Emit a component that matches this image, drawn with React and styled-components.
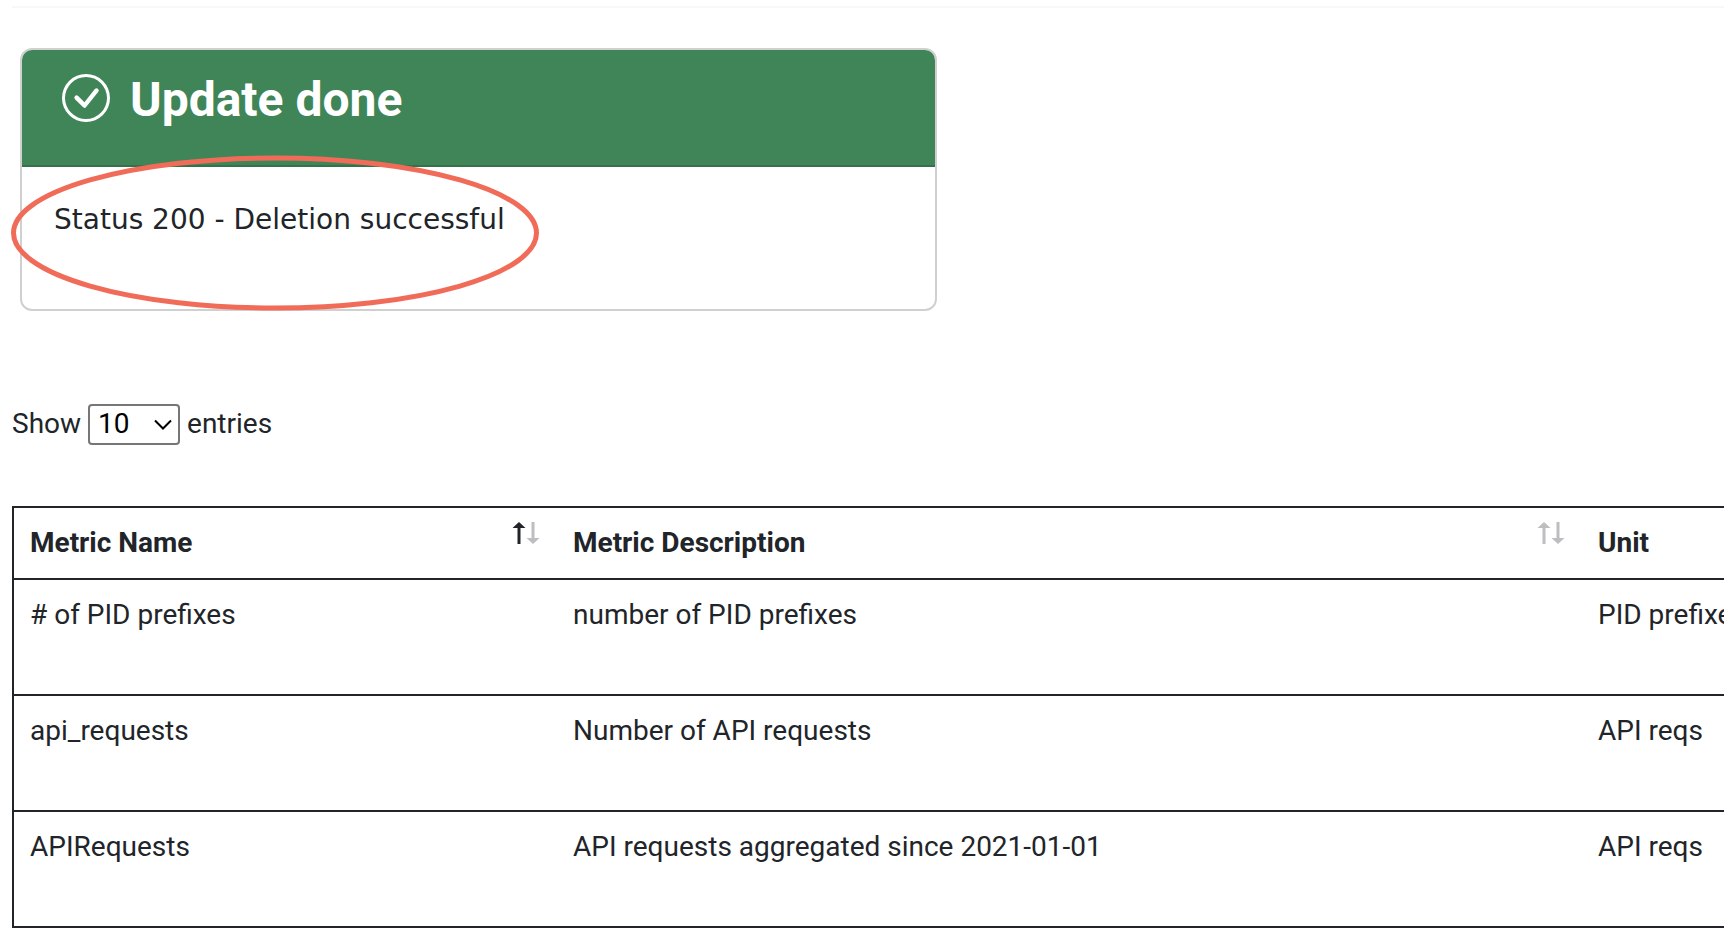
import React, { useState } from "react";
import styled, { createGlobalStyle } from "styled-components";
import { BsCheckCircle } from "react-icons/bs";

const GlobalStyle = createGlobalStyle`
  *, *::before, *::after { box-sizing: border-box; }
  body {
    margin: 0;
    overflow-x: hidden;
    background: #fff;
    color: #212529;
    font: 400 28px/42px Roboto, "Liberation Sans", sans-serif;
  }
`;

const Page = styled.main`
  padding: 6px 0 0 12px;
`;

const Divider = styled.hr`
  margin: 0 0 40px;
  border: 0;
  border-top: 2px solid #f8f8f8;
`;

const Card = styled.section`
  position: relative;
  width: 54%;
  max-width: 917px;
  min-width: 540px;
  margin-left: 8px;
  border: 2px solid #d0d0d0;
  border-radius: 12px;
`;

const CardHeader = styled.header`
  display: flex;
  align-items: flex-start;
  gap: 20px;
  padding: 24px 40px 39px;
  border-bottom: 2px solid #36714c;
  border-radius: 10px 10px 0 0;
  background: #408558;
  color: #fff;
`;

const CardTitle = styled.h2`
  margin: 0;
  font-size: 48px;
  line-height: 52px;
  font-weight: 700;
`;

const CardBody = styled.p`
  margin: 0;
  padding: 32px 32px 68px;
  font-family: Verdana, "DejaVu Sans", sans-serif;
`;

const Highlight = styled.svg`
  position: absolute;
  top: 105px;
  left: -12px;
  width: 530px;
  height: 157px;
  pointer-events: none;
`;

const LengthControl = styled.div`
  display: flex;
  align-items: center;
  gap: 7px;
  margin: 92px 0 61px;
`;

const SelectBox = styled.div`
  position: relative;
  display: flex;
`;

const Select = styled.select`
  appearance: none;
  width: 92px;
  height: 41px;
  padding: 0 8px;
  border: 2px solid #767676;
  border-radius: 4px;
  background: #fff;
  color: #000;
  font: inherit;
  line-height: 36px;
`;

const Chevron = styled.svg`
  position: absolute;
  top: 14px;
  right: 7px;
  pointer-events: none;
`;

const Table = styled.table`
  width: 1900px;
  table-layout: fixed;
  border-collapse: separate;
  border-spacing: 0;
  border: 2px solid #212529;
  border-bottom: 0;
`;

const NameCol = styled.col`
  width: 543px;
`;

const DescriptionCol = styled.col`
  width: 1025px;
`;

const HeadCell = styled.th`
  padding: 0;
  border-bottom: 2px solid #212529;
  text-align: left;
`;

const SortButton = styled.button`
  display: flex;
  justify-content: space-between;
  align-items: flex-start;
  width: 100%;
  padding: 14px 16px;
  border: 0;
  background: none;
  color: inherit;
  font: inherit;
  font-weight: 700;
  text-align: left;
  cursor: pointer;
`;

const Cell = styled.td`
  height: 116px;
  padding: 14px 16px;
  border-bottom: 2px solid #212529;
  vertical-align: top;
`;

const ACTIVE = "#212529";
const IDLE = "#bcbebf";

function SortIcon({ direction }) {
  return (
    <svg width="29" height="22" viewBox="0 0 29 22" aria-hidden="true">
      <path d="M7 0 13.5 6H8.5V22H5.5V6H.5Z" fill={direction === "asc" ? ACTIVE : IDLE} />
      <path d="M21 22 27.5 16H22.5V0H19.5V16H14.5Z" fill={direction === "desc" ? ACTIVE : IDLE} />
    </svg>
  );
}

const columns = ["Metric Name", "Metric Description", "Unit"];

const metrics = [
  ["# of PID prefixes", "number of PID prefixes", "PID prefixes"],
  ["api_requests", "Number of API requests", "API reqs"],
  ["APIRequests", "API requests aggregated since 2021-01-01", "API reqs"],
];

export default function App() {
  const [length, setLength] = useState("10");
  return (
    <Page>
      <GlobalStyle />
      <Divider />
      <Card>
        <CardHeader>
          <BsCheckCircle size={48} aria-hidden="true" />
          <CardTitle>Update done</CardTitle>
        </CardHeader>
        <CardBody>Status 200 - Deletion successful</CardBody>
        <Highlight viewBox="0 0 530 157" aria-hidden="true">
          <ellipse cx="265" cy="78" rx="261.5" ry="75" fill="none" stroke="#f06c59" strokeWidth="5" />
        </Highlight>
      </Card>

      <LengthControl>
        <label htmlFor="length">Show</label>
        <SelectBox>
          <Select id="length" value={length} onChange={(e) => setLength(e.target.value)}>
            <option>10</option>
            <option>25</option>
            <option>50</option>
            <option>100</option>
          </Select>
          <Chevron width="20" height="14" viewBox="0 0 20 14" aria-hidden="true">
            <path d="M2 2.5 10 10.5 18 2.5" fill="none" stroke="#000" strokeWidth="2" />
          </Chevron>
        </SelectBox>
        <span>entries</span>
      </LengthControl>

      <Table>
        <colgroup>
          <NameCol />
          <DescriptionCol />
          <col />
        </colgroup>
        <thead>
          <tr>
            {columns.map((name, i) => (
              <HeadCell key={name} scope="col" aria-sort={i === 0 ? "ascending" : undefined}>
                <SortButton type="button">
                  {name}
                  <SortIcon direction={i === 0 ? "asc" : undefined} />
                </SortButton>
              </HeadCell>
            ))}
          </tr>
        </thead>
        <tbody>
          {metrics.map((row) => (
            <tr key={row[0]}>
              {row.map((text, i) => (
                <Cell key={columns[i]}>{text}</Cell>
              ))}
            </tr>
          ))}
        </tbody>
      </Table>
    </Page>
  );
}
